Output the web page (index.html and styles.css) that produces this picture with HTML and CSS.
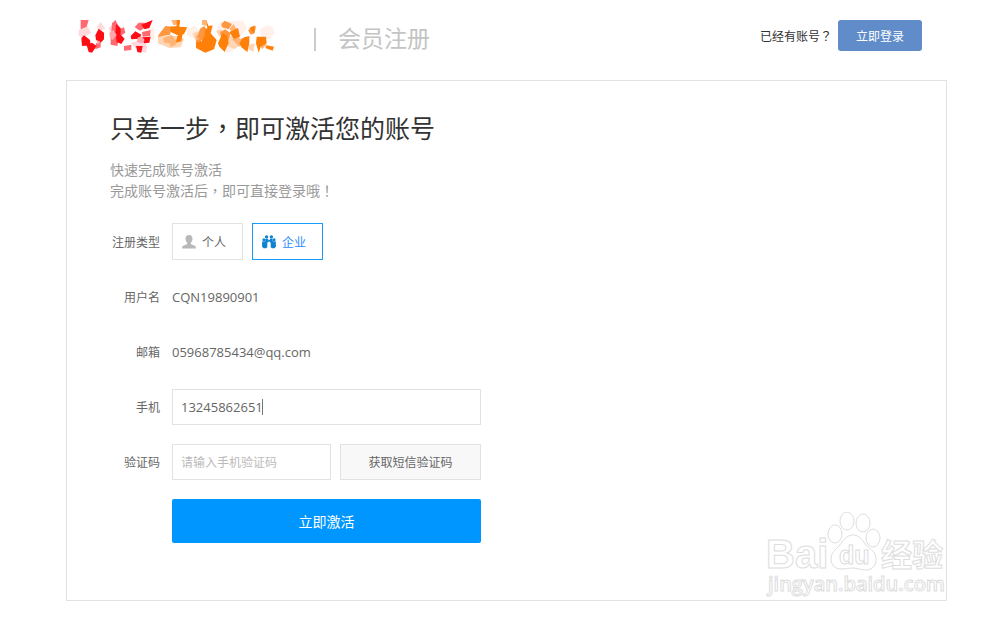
FILE: index.html
```html
<!DOCTYPE html>
<html lang="zh-CN">
<head>
  <meta charset="UTF-8">
  <meta name="viewport" content="width=device-width, initial-scale=1.0">
  <title>会员注册</title>
  <link rel="stylesheet" href="styles.css">
</head>
<body>

  <div class="page">
    <header class="header">
      <svg class="logo" viewBox="0 0 606 120" role="img" aria-label="logo">
        <!-- pale pieces -->
        <path fill="#ffd9dc" d="M8 42l26-12 12 20-22 14-16-4zM62 34l12-16 14 20-20 8zM98 36l12-12 4 20-10 14zM186 72l14-8 12 22-14 10zM198 92l16-4-4 22-12-2zM164 80l24-4 14 14-24 6z"/>
        <path fill="#fff0ea" d="M220 40l14-6 2 40-14-4zM332 40l26-12 12 22-18 16-18-6zM420 36l18-22 10 24-16 6zM452 16l50-2 12 24-22 24-24-10zM552 40l20-12 18 4 6 20-14 18-26-4zM444 90l22-8 6 24-20 4z"/>
        <path fill="#ffd5b3" d="M246 60l20 0 40 0 18 8-10 26-34 2-34-14zM350 52l18-6 6 22-16 6zM450 60l26 0 20 24-20 16-30-12zM420 44l16-4 12 16-18 6zM520 86l16-4-4 26-14-8z"/>
        <!-- red letters -->
        <path fill="#ff6971" d="M14 12h24l-6 20-18 8zM60 82l14-6 0 18-16 6zM108 22l10-10 12 22-10 18-14-6zM104 62l14-6 10 14-4 20-20-4zM176 34l12-14 18 0 4 14-18 10zM130 40l14-6 4 16-14 10zM144 90l22-4 0 16-22 2zM198 48l26-6-2 18-22 2z"/>
        <path fill="#ff0d15" d="M16 66l8-8 18 14 2 16-26 2zM32 88l16-8 14 10-14 20-10-2zM68 38l16 12 0 20-10 10-14-8-2-14zM120 24l14 12 0 20 12 12-10 16-14-6-4-26zM196 26l34-14-10 24-14 4zM164 60l14-14 18 10-6 12-24 2zM198 64l26-2-4 18-16 2zM180 90l20 0-4 20-12-2z"/>
        <path fill="#ffa7ad" d="M100 50l12-8 10 16-12 14-8-6zM198 62l-12 2-4 14 18 4 6-10zM62 72l12 6-10 8z"/>
        <!-- orange characters -->
        <path fill="#ffb475" d="M286 12h26v12l-20 4zM262 66l24-10 12 16-14 10-20-2zM282 76l24-8-8 20-16 4zM358 60l14-6 8 14-16 10zM378 12l14 0 0 18-14-4zM460 40l12-16 12 18-10 12zM468 70l20-6 16 16-14 12zM550 84l14-8 8 10-14 14z"/>
        <path fill="#ff9640" d="M248 56l20-26 20 2-6 24-36 6zM372 38l12-8 14 16-4 22-14 8-16-12zM360 72l16-4-2 22-12 0zM436 24l10-10 22 10-10 16-20-6zM432 48l16-8 16 12-8 24-18-4zM494 68l18-4-2 28-14-14zM516 42l24-12-4 22-12 4z"/>
        <path fill="#ff8008" d="M282 32l20-2 0-18 10 0-2 20 24 2-10 20-14 6-26-12zM304 60l16-6-4 22-16 4zM390 12l8 18 12-2-6 24 18 20-8 28-26 10-28-14 0-18 18-2 8-20 0-12 8-8zM426 82l14-32 14 10 4 20-12 28-16-16zM460 48l26-12 6 26-18 8zM490 80l14-16 16-4 0 22-6 26-18-14zM520 36l16-8-2 24zM542 62l28 0 2 20-18 10-6 18-8-28zM572 88l22 4-4 12-22-8z"/>
      </svg>
      <span class="divider"></span>
      <h1 class="header-title">会员注册</h1>
      <div class="login-box">
        <span>已经有账号<span class="punct" lang="zh-TW">？</span></span>
        <button type="button" class="login-button">立即登录</button>
      </div>
    </header>

    <main class="card">
      <h2>只差一步<span class="punct" lang="zh-TW">，</span>即可激活您的账号</h2>
      <p class="intro">快速完成账号激活<br>完成账号激活后<span class="punct" lang="zh-TW">，</span>即可直接登录哦<span class="punct" lang="zh-TW">！</span></p>

      <form class="form" id="activateForm">
        <div class="form-row" role="radiogroup" aria-labelledby="typeLabel">
          <span class="label" id="typeLabel">注册类型</span>
          <div class="types">
            <label class="type">
              <input type="radio" name="type" value="personal">
              <svg class="type-icon" viewBox="0 0 14 14" fill="#b8b8b8">
                <path d="M7 0C4.700 0 3.500 1.500 3.500 3.600c0 1.900.7 3.300 1.700 4.200v1.300C4.700 10 .5 10.300.2 12v1.500h13.600V12c-.3-1.700-4.500-2-5-2.900V7.800c1-.9 1.700-2.300 1.700-4.200C10.500 1.500 9.300 0 7 0z"/>
              </svg>
              个人
            </label>
            <label class="type">
              <input type="radio" name="type" value="company" checked>
              <svg class="type-icon" viewBox="0 0 14 14" fill="#0f82d2">
                <circle cx="4.600" cy="2" r="1.700"/>
                <circle cx="9.400" cy="2" r="1.700"/>
                <circle cx="1.900" cy="4.800" r="1.500"/>
                <circle cx="12.100" cy="4.800" r="1.500"/>
                <path d="M3.400 4h2.500L7 5.600 8.100 4h2.500l.2 3-2 1L7 6.300 5.200 8l-2-1z"/>
                <path d="M.2 6.600l3.400-.3L5.300 8v4.200l-1.300 1H1.500L0 11.500zM13.800 6.600l-3.400-.3L8.700 8v4.200l1.300 1h2.500L14 11.500z"/>
              </svg>
              企业
            </label>
          </div>
        </div>

        <div class="form-row">
          <span class="label">用户名</span>
          <span class="value">CQN19890901</span>
        </div>

        <div class="form-row">
          <span class="label">邮箱</span>
          <span class="value">05968785434@qq.com</span>
        </div>

        <div class="form-row">
          <label class="label" for="phone">手机</label>
          <div class="phone-box">
            <input type="tel" id="phone" value="13245862651">
            <span class="caret"></span>
          </div>
        </div>

        <div class="form-row">
          <label class="label" for="code">验证码</label>
          <div class="code-box">
            <input type="text" id="code" placeholder="请输入手机验证码">
            <button type="button" class="code-button">获取短信验证码</button>
          </div>
        </div>

        <div class="form-row">
          <button type="submit" class="button">立即激活</button>
        </div>
      </form>

      <svg class="watermark" viewBox="0 0 180 88" role="img" aria-label="Baidu 经验">
        <g class="watermark-line">
          <text class="watermark-brand" x="0" y="56">Bai</text>
          <text class="watermark-cn" x="115" y="54">经验</text>
          <text class="watermark-url" x="2" y="79">jingyan.baidu.com</text>
          <ellipse cx="69" cy="22" rx="7" ry="9"/>
          <ellipse cx="81" cy="9" rx="7" ry="9"/>
          <ellipse cx="97" cy="11" rx="7" ry="9"/>
          <ellipse cx="107" cy="26" rx="7" ry="9"/>
          <path d="M87 23c-7 0-10 6-14 11-4 4-8 7-8 13 0 6 4 10 10 10 5 0 8-1 12-1s8 2 13 2c6 0 10-4 10-11s-5-9-9-13c-4-5-7-11-14-11z"/>
          <text class="watermark-du" x="73" y="52">du</text>
        </g>
      </svg>
    </main>
  </div>

  <script>
    const form = document.getElementById('activateForm');
    const phone = document.getElementById('phone');
    const caret = document.querySelector('.caret');

    phone.addEventListener('focus', () => {
      caret.style.display = 'none';
    });

    form.addEventListener('submit', (e) => {
      e.preventDefault();
    });
  </script>

</body>
</html>
```
FILE: styles.css
```css
* {
  box-sizing: border-box;
}
body {
  margin: 0;
  background: #fff;
  color: #666;
  font-family: "Open Sans", "Noto Sans CJK SC", sans-serif;
  font-size: 12px;
}
input,
button {
  font-family: inherit;
  font-size: 12px;
}
button {
  padding: 0;
  cursor: pointer;
}
.punct {
  font-family: "Noto Sans CJK TC", sans-serif;
}
.page {
  padding: 0 53px 18px 66px;
}
.header {
  display: flex;
  align-items: center;
  height: 80px;
  padding: 0 25px 9px 10px;
}
.logo {
  width: 202px;
  height: 40px;
}
.divider {
  width: 2px;
  height: 23px;
  margin: 8px 22px 0 36px;
  background: #ccc;
}
.header-title {
  margin: 5px 0 0;
  color: #c4c4c4;
  font-size: 23px;
  font-weight: 400;
  line-height: 32px;
}
.login-box {
  display: flex;
  align-items: center;
  margin-left: auto;
  color: #333;
}
.login-button {
  width: 84px;
  height: 31px;
  margin-left: 6px;
  border: none;
  border-radius: 3px;
  background: #608dc9;
  color: #fff;
}
.card {
  position: relative;
  padding: 28px 43px 57px;
  border: 1px solid #e2e2e2;
}
h2 {
  margin: 0 0 13px;
  color: #333;
  font-size: 25px;
  font-weight: 400;
  line-height: 36px;
}
.intro {
  margin: 0 0 22px;
  color: #999;
  font-size: 14px;
  line-height: 21px;
}
.form {
  display: flex;
  flex-direction: column;
  gap: 19px;
  max-width: 371px;
}
.form-row {
  display: grid;
  grid-template-columns: 50px 1fr;
  column-gap: 12px;
  align-items: center;
  min-height: 36px;
}
.label {
  text-align: right;
}
.value {
  font-size: 13px;
}
.types {
  display: flex;
  gap: 9px;
}
.type {
  position: relative;
  display: flex;
  align-items: center;
  gap: 6px;
  width: 71px;
  height: 37px;
  padding-left: 9px;
  border: 1px solid #e2e2e2;
  cursor: pointer;
}
.type:has(input:checked) {
  border-color: #1a9cff;
  color: #2a8cff;
}
.type input {
  position: absolute;
  opacity: 0;
  margin: 0;
}
.type-icon {
  width: 14px;
  height: 14px;
}
input[type="tel"],
input[type="text"] {
  width: 100%;
  min-width: 0;
  height: 36px;
  padding: 0 8px;
  border: 1px solid #e2e2e2;
  background: #fff;
  color: #666;
  outline: none;
}
input[type="tel"] {
  display: block;
  font-size: 13px;
}
input::placeholder {
  color: #bbb;
}
.phone-box {
  position: relative;
}
.caret {
  position: absolute;
  top: 10px;
  left: 90px;
  width: 1px;
  height: 16px;
  background: #777;
  pointer-events: none;
}
.code-box {
  display: grid;
  grid-template-columns: 159px 1fr;
  gap: 9px;
}
.code-button {
  border: 1px solid #e2e2e2;
  background: #f8f8f8;
  color: #666;
}
.button {
  grid-column: 2;
  height: 44px;
  border: none;
  border-radius: 2px;
  background: #0096ff;
  color: #fff;
  font-size: 14px;
}
.watermark {
  position: absolute;
  right: 0;
  bottom: 0;
  width: 180px;
  height: 88px;
  pointer-events: none;
}
.watermark-line {
  fill: #fff;
  stroke: #ddd;
  stroke-width: 1px;
}
.watermark-brand {
  font: 700 40px "Liberation Sans", sans-serif;
}
.watermark-du {
  font: 700 25px "Liberation Sans", sans-serif;
}
.watermark-cn {
  font: 700 31px "Noto Sans CJK SC", sans-serif;
}
.watermark-url {
  font: 600 20px "Open Sans", sans-serif;
}
```
